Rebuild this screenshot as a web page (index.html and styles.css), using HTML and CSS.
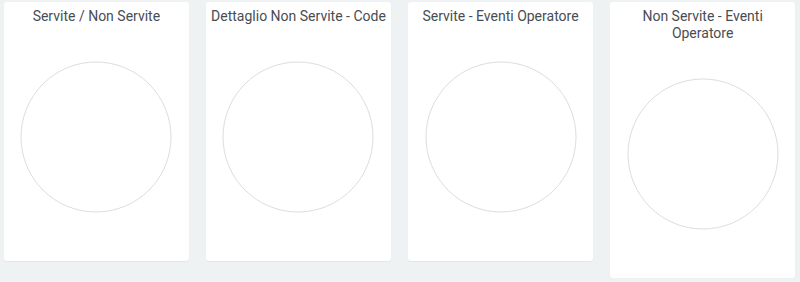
FILE: index.html
```html
<!DOCTYPE html>
<html lang="it">
<head>
<meta charset="utf-8">
<title>Dashboard</title>
<link rel="stylesheet" href="styles.css">
</head>
<body>
<div class="row">
  <div class="card">
    <div class="title">Servite / Non Servite</div>
    <svg class="chart" width="152" height="152" viewBox="0 0 152 152"><circle cx="76" cy="76" r="75" /></svg>
  </div>
  <div class="card">
    <div class="title">Dettaglio Non Servite - Code</div>
    <svg class="chart" width="152" height="152" viewBox="0 0 152 152"><circle cx="76" cy="76" r="75" /></svg>
  </div>
  <div class="card">
    <div class="title">Servite - Eventi Operatore</div>
    <svg class="chart" width="152" height="152" viewBox="0 0 152 152"><circle cx="76" cy="76" r="75" /></svg>
  </div>
  <div class="card">
    <div class="title">Non Servite - Eventi<br>Operatore</div>
    <svg class="chart" width="152" height="152" viewBox="0 0 152 152"><circle cx="76" cy="76" r="75" /></svg>
  </div>
</div>
</body>
</html>
```

FILE: styles.css
```css
html, body {
  margin: 0;
  padding: 0;
  background: #eef2f3;
  font-family: Roboto, "Liberation Sans", sans-serif;
}
.row {
  display: flex;
  align-items: flex-start;
  gap: 17.33px;
  padding: 2px 5px 0 4px;
}
.card {
  flex: 1 1 0;
  min-width: 0;
  background: #fff;
  border-radius: 3px;
  box-shadow: 0 1px 1px rgba(0, 0, 0, 0.05);
  display: flex;
  flex-direction: column;
  align-items: center;
  padding: 6px 0 48px;
}
.title {
  font-size: 14px;
  line-height: 17px;
  color: #484d53;
  text-align: center;
}
.chart {
  display: block;
  margin-top: 36px;
}
.chart circle {
  fill: none;
  stroke: #dddddd;
  stroke-width: 1;
}
```
